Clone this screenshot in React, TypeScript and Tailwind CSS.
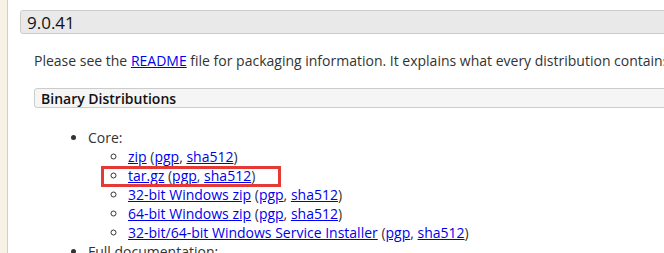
const link = "text-[#0000ee] underline";

function Entry({ name }: { name: string }) {
  return (
    <li>
      <a className={link}>{name}</a> (<a className={link}>pgp</a>,{" "}
      <a className={link}>sha512</a>)
    </li>
  );
}

export default function App() {
  return (
    <div className="relative flex h-[253px] w-[664px] overflow-hidden bg-white font-['Open_Sans',sans-serif] text-[14px] leading-[19px] text-[#222]">
      {/* side strip */}
      <div className="w-[8px] shrink-0 border-r border-[#d4d0c8] bg-[#f8f1e6]" />

      <div className="flex-1 pl-[12px] pt-[10px]">
        <div className="-mr-[20px] flex h-[24px] items-center rounded-l-[3px] border border-[#cccccc] bg-[#e9e9e9] pl-[6px] text-[17px] text-[#111]">
          9.0.41
        </div>

        <div className="pl-[14px]">
          <p className="mt-[17px] whitespace-nowrap text-[#333]">
            Please see the <a className={link}>README</a> file for packaging information. It explains what every
            distribution contains.
          </p>

          <div className="-mr-[20px] mt-[18px] flex h-[20px] items-center rounded-l-[3px] border border-[#cccccc] bg-[#f5f5f5] pl-[6px] font-semibold text-[#111]">
            Binary Distributions
          </div>

          <ul className="mt-[20px] list-disc whitespace-nowrap pl-[54px] text-[#333]">
            <li>
              Core:
              <ul className="list-[circle] pl-[40px]">
                <Entry name="zip" />
                <Entry name="tar.gz" />
                <Entry name="32-bit Windows zip" />
                <Entry name="64-bit Windows zip" />
                <Entry name="32-bit/64-bit Windows Service Installer" />
              </ul>
            </li>
            <li>Full documentation:</li>
          </ul>
        </div>
      </div>

      {/* annotation box */}
      <div className="absolute left-[101px] top-[166px] h-[21px] w-[180px] border-[3px] border-[#e53935]" />
    </div>
  );
}
